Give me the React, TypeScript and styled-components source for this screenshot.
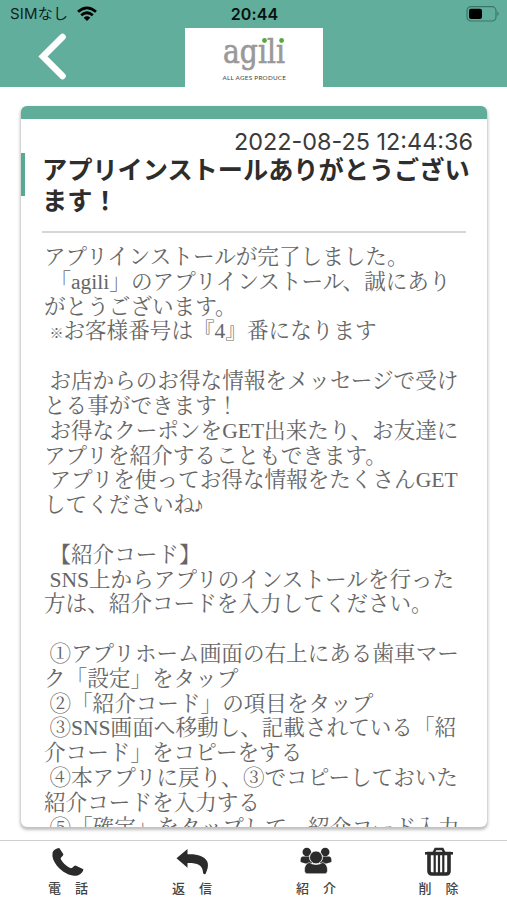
import React, { ReactNode } from 'react';
import styled, { createGlobalStyle } from 'styled-components';

const GlobalStyle = createGlobalStyle`
  * { box-sizing: border-box; }
  body { margin: 0; background: #fff; }
`;

const Screen = styled.div`
  display: flex;
  flex-direction: column;
  width: 507px;
  height: 900px;
  overflow: hidden;
  background: #fff;
  font-family: Inter, 'Noto Sans CJK JP', sans-serif;
`;

const Header = styled.header`
  height: 87px;
  flex: none;
  background: #62ae9c;
`;

const StatusBar = styled.div`
  display: grid;
  grid-template-columns: 1fr auto 1fr;
  align-items: center;
  height: 28px;
  padding: 0 8px 0 10px;
  color: #10211d;
`;

const Carrier = styled.div`
  display: flex;
  align-items: center;
  gap: 9px;
  font-size: 15px;
  line-height: 28px;
`;

const CarrierName = styled.span`
  letter-spacing: 0.2px;
  white-space: nowrap;
`;

const Clock = styled.div`
  font-size: 16px;
  font-weight: 600;
  letter-spacing: 0.1px;
  color: #06120f;
`;

const Battery = styled.svg`
  justify-self: end;
`;

const NavBar = styled.div`
  display: grid;
  grid-template-columns: 185px 138px 1fr;
  height: 59px;
`;

const BackButton = styled.button`
  width: 30px;
  height: 50px;
  margin: 4px 0 0 37px;
  padding: 0;
  border: 0;
  background: none;
`;

const Logo = styled.div`
  background: #fff;
`;

const Main = styled.main`
  height: 753px;
  flex: none;
  padding: 19px 20px 0 21px;
`;

const Card = styled.article`
  height: 721px;
  overflow: hidden;
  border-radius: 6px;
  border-top: 13px solid #60ae9a;
  background: #fff;
  box-shadow: 0 2px 3px 1px rgba(0, 0, 0, 0.25);
`;

const DateLine = styled.div`
  height: 34px;
  padding: 8px 14px 0 0;
  text-align: right;
  font-size: 23.4px;
  line-height: 29px;
  white-space: nowrap;
  color: #3b3b3b;
`;

const TitleBlock = styled.div`
  display: flex;
  height: 80px;
`;

const Accent = styled.div`
  flex: none;
  width: 4px;
  height: 43px;
  background: #57a993;
`;

const Title = styled.h1`
  flex: 1;
  min-width: 0;
  margin: 0 21px 0 17px;
  border-bottom: 2px solid #d6d6d6;
  font: 700 25.2px/31px 'Noto Sans CJK JP', sans-serif;
  white-space: nowrap;
  color: #2d2d2d;
`;

const Message = styled.div`
  padding: 12px 0 0 23px;
  font-family: 'Liberation Serif', 'Noto Serif CJK JP', 'Noto Sans CJK JP', serif;
  font-size: 21.6px;
  font-weight: 400;
  color: #666;
`;

const Line = styled.div`
  height: 24.82px;
  line-height: 24.82px;
  white-space: pre;
`;

const SmallMark = styled.span`
  font-size: 14px;
  font-weight: 700;
`;

const Note = styled.span`
  margin-left: -2px;
  font-weight: 700;
`;

const Footer = styled.nav`
  display: grid;
  grid-template-columns: 124px 124px 124px 121px;
  height: 60px;
  flex: none;
  padding-left: 6px;
  border-top: 1px solid #cfcfcf;
`;

const Tab = styled.button`
  display: flex;
  flex-direction: column;
  align-items: center;
  gap: 2px;
  padding: 6px 0 0;
  border: 0;
  background: none;
  color: #2b2b2b;
`;

const TabLabel = styled.span`
  font: 500 13px/17px 'Noto Sans CJK JP', sans-serif;
  letter-spacing: 14px;
  margin-right: -14px;
  color: #444;
`;

const lines: ReactNode[] = [
  'アプリインストールが完了しました。',
  ' 「agili」のアプリインストール、誠にあり',
  'がとうございます。',
  <> <SmallMark>※</SmallMark>お客様番号は『4』番になります</>,
  '',
  ' お店からのお得な情報をメッセージで受け',
  'とる事ができます！',
  ' お得なクーポンをGET出来たり、お友達に',
  'アプリを紹介することもできます。',
  ' アプリを使ってお得な情報をたくさんGET',
  <>してくださいね<Note>♪</Note></>,
  '',
  ' 【紹介コード】',
  ' SNS上からアプリのインストールを行った',
  '方は、紹介コードを入力してください。',
  '',
  ' ①アプリホーム画面の右上にある歯車マー',
  'ク「設定」をタップ',
  ' ②「紹介コード」の項目をタップ',
  ' ③SNS画面へ移動し、記載されている「紹',
  '介コード」をコピーをする',
  ' ④本アプリに戻り、③でコピーしておいた',
  '紹介コードを入力する',
  ' ⑤「確定」をタップして、紹介コード入力',
];

const PhoneIcon = () => (
  <svg width="32" height="30" viewBox="0 0 32 30" fill="currentColor">
    <path d="M.6 5.5C1.4 3 4 1.2 7.3 1L11.4 7.2C11.4 9 8.8 10 8.6 11.5C9.5 14.5 14.5 19.7 19 21.2C21 21 21.7 18.4 23.5 18.5L31.4 22.2C30.8 26.2 27 28.8 22.5 28.8C12 28 1.2 17.5.4 8.5Z" />
  </svg>
);

const ReplyIcon = () => (
  <svg width="32" height="30" viewBox="0 0 32 30" fill="currentColor">
    <path d="M0.5 11.3L11.5 2V7.2C21 6.7 28 8.8 31 14C33 18 31.5 22.5 29.5 27C28.2 27.5 27.2 27 27 25.5C26.8 18 21 15.8 11.5 16V20.7Z" />
  </svg>
);

const GroupIcon = () => (
  <svg width="32" height="30" viewBox="0 0 32 30" fill="currentColor">
    <circle cx="6.8" cy="5" r="4.3" />
    <circle cx="25.2" cy="5" r="4.3" />
    <path d="M3 9.5C1.5 9.5.6 11 .6 13V15L5.5 16.6H12V9.5ZM29 9.5C30.5 9.5 31.4 11 31.4 13V15L26.5 16.6H20V9.5Z" />
    <path d="M9.7 15.5C11.8 18 20.2 18 22.3 15.5C26 16 27.5 19.5 27.5 23.2C27.5 25.7 26.5 26.8 24 26.8H8C5.5 26.8 4.5 25.7 4.5 23.2C4.5 19.5 6 16 9.7 15.5Z" stroke="#fff" strokeWidth=".6" />
    <circle cx="16" cy="10.4" r="6.5" stroke="#fff" strokeWidth=".9" />
  </svg>
);

const TrashIcon = () => (
  <svg width="30" height="30" viewBox="0 0 30 30" fill="none" stroke="currentColor">
    <path d="M9.5 6L11.5 2H18.5L20.5 6" strokeWidth="2.5" />
    <path d="M1 6.3H29" strokeWidth="2.6" />
    <path d="M5 6.5H25V24Q25 27 22 27H8Q5 27 5 24Z" strokeWidth="3.6" />
    <path d="M10.7 8V26M15 8V26M19.3 8V26" strokeWidth="2.2" />
  </svg>
);

const tabs = [
  { label: '電話', icon: <PhoneIcon /> },
  { label: '返信', icon: <ReplyIcon /> },
  { label: '紹介', icon: <GroupIcon /> },
  { label: '削除', icon: <TrashIcon /> },
];

export default function App() {
  return (
    <Screen>
      <GlobalStyle />
      <Header>
        <StatusBar>
          <Carrier>
            <CarrierName>SIMなし</CarrierName>
            <svg width="20" height="16" viewBox="0 0 20 16" fill="none" stroke="#000" strokeWidth="2.7">
              <path d="M1 5.8Q10-2.2 19 5.8M4.2 9.3Q10 4.2 15.8 9.3" />
              <path d="M6.7 11.7Q10 8.8 13.3 11.7L10 15Z" fill="#000" stroke="none" />
            </svg>
          </Carrier>
          <Clock>20:44</Clock>
          <Battery width="33" height="16" viewBox="0 0 33 16">
            <rect x="1" y=".7" width="29" height="14.3" rx="4" fill="none" stroke="#397668" strokeWidth="1.2" />
            <rect x="3" y="2.8" width="13" height="10.2" rx="2" fill="#000" />
            <path d="M31.4 5.3Q34 7.7 31.4 10Z" fill="#397668" />
          </Battery>
        </StatusBar>
        <NavBar>
          <BackButton aria-label="戻る">
            <svg width="30" height="50" viewBox="0 0 30 50" fill="none">
              <path d="M25.5 5L6 24.5L25.5 44" stroke="#fff" strokeWidth="6.6" strokeLinecap="round" />
            </svg>
          </BackButton>
          <Logo>
            <svg width="138" height="59" viewBox="0 0 138 59">
              <text x="38" y="35" fontFamily="DejaVu Serif" fontSize="34" textLength="62" lengthAdjust="spacingAndGlyphs" fill="#999" stroke="#999" strokeWidth="0.7">agılı</text>
              <circle cx="79.5" cy="12.5" r="2.4" fill="#57a83d" />
              <circle cx="96.6" cy="12.5" r="2.4" fill="#57a83d" />
              <text x="37.5" y="51.5" fontFamily="Lato" fontSize="6.3" textLength="63.5" fill="#444">ALL AGES PRODUCE</text>
            </svg>
          </Logo>
        </NavBar>
      </Header>
      <Main>
        <Card>
          <DateLine>2022-08-25 12:44:36</DateLine>
          <TitleBlock>
            <Accent />
            <Title>アプリインストールありがとうござい<br />ます！</Title>
          </TitleBlock>
          <Message>
            {lines.map((text, i) => (
              <Line key={i}>{text}</Line>
            ))}
          </Message>
        </Card>
      </Main>
      <Footer>
        {tabs.map(({ label, icon }) => (
          <Tab key={label}>
            {icon}
            <TabLabel>{label}</TabLabel>
          </Tab>
        ))}
      </Footer>
    </Screen>
  );
}
